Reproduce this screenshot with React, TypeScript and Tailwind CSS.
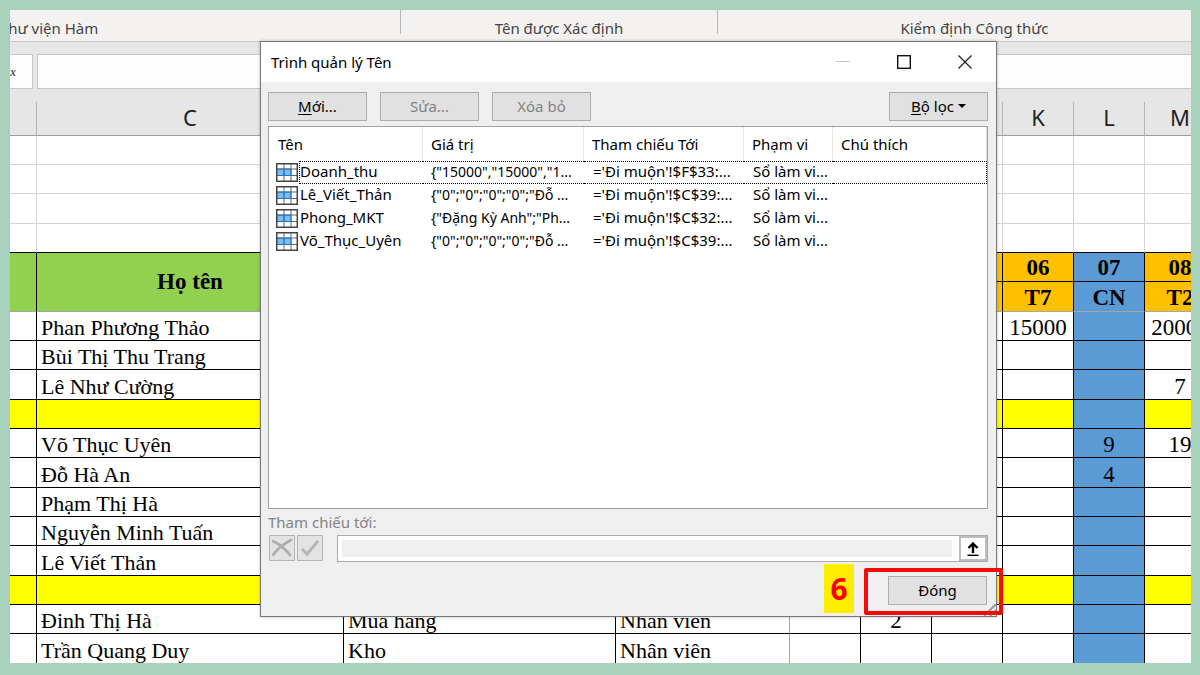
import type { ReactNode } from "react";
import clsx from "clsx";

/* ───────────── Data ───────────── */

interface SheetRow {
  kind: "data" | "divider";
  cells?: Record<string, string>;
}

const COLUMNS = ["B", "C", "D", "E", "H", "I", "J", "K", "L", "M"];

const DAYS = [
  { col: "H", day: "03", weekday: "T4" },
  { col: "I", day: "04", weekday: "T5" },
  { col: "J", day: "05", weekday: "T6" },
  { col: "K", day: "06", weekday: "T7" },
  { col: "L", day: "07", weekday: "CN" },
  { col: "M", day: "08", weekday: "T2" },
];

const ROWS: SheetRow[] = [
  { kind: "data", cells: { C: "Phan Phương Thảo", K: "15000", M: "20000" } },
  { kind: "data", cells: { C: "Bùi Thị Thu Trang" } },
  { kind: "data", cells: { C: "Lê Như Cường", M: "7" } },
  { kind: "divider" },
  { kind: "data", cells: { C: "Võ Thục Uyên", L: "9", M: "19" } },
  { kind: "data", cells: { C: "Đỗ Hà An", L: "4" } },
  { kind: "data", cells: { C: "Phạm Thị Hà" } },
  { kind: "data", cells: { C: "Nguyễn Minh Tuấn" } },
  { kind: "data", cells: { C: "Lê Viết Thản" } },
  { kind: "divider" },
  { kind: "data", cells: { C: "Đinh Thị Hà", D: "Mua hàng", E: "Nhân viên", I: "2" } },
  { kind: "data", cells: { C: "Trần Quang Duy", D: "Kho", E: "Nhân viên" } },
];

const NAMES = [
  { name: "Doanh_thu", value: '{"15000","15000","1...', refersTo: "='Đi muộn'!$F$33:...", scope: "Sổ làm vi..." },
  { name: "Lê_Viết_Thản", value: '{"0";"0";"0";"0";"Đỗ ...', refersTo: "='Đi muộn'!$C$39:...", scope: "Sổ làm vi..." },
  { name: "Phong_MKT", value: '{"Đặng Kỳ Anh";"Ph...', refersTo: "='Đi muộn'!$C$32:...", scope: "Sổ làm vi..." },
  { name: "Võ_Thục_Uyên", value: '{"0";"0";"0";"0";"Đỗ ...', refersTo: "='Đi muộn'!$C$39:...", scope: "Sổ làm vi..." },
];

/* ───────────── Page ───────────── */

export default function App() {
  return (
    <div className="relative flex h-screen flex-col overflow-hidden border-t-10 border-r-9 border-b-12 border-l-10 border-[#a8d1bc] bg-white font-['Noto_Sans','Open_Sans',sans-serif]">
      <RibbonLabels />
      <FormulaBar />
      <Sheet />
      <NameManager />
      <Callout />
    </div>
  );
}

function RibbonLabels() {
  return (
    <div className="flex h-8 shrink-0 border-b border-[#c9c9c9] bg-[#f3f2f1] text-[15px] leading-9 whitespace-nowrap text-[#444]">
      <div className="h-6 w-[391px] shrink-0 border-r border-[#b9b9b9]">
        <span className="-ml-2.5">Thư viện Hàm</span>
      </div>
      <div className="h-6 w-[317px] shrink-0 border-r border-[#b9b9b9] text-center">Tên được Xác định</div>
      <div className="h-6 w-[513px] shrink-0 text-center">Kiểm định Công thức</div>
    </div>
  );
}

function FormulaBar() {
  return (
    <div className="flex h-[60px] shrink-0 gap-1 bg-[#e6e6e6] pt-3">
      <div className="flex h-[35px] w-[23px] items-center border border-l-0 border-[#c6c6c6] bg-[#fdfdfd]">
        <span className="font-['Liberation_Serif',serif] text-xs font-bold text-[#555] italic">x</span>
      </div>
      <input
        aria-label="Formula"
        className="h-[35px] min-w-0 flex-1 border border-r-0 border-[#c6c6c6] bg-[#fdfdfd] px-2"
      />
    </div>
  );
}

/* ───────────── Worksheet ───────────── */

// Rows average 29⅓px, so every third one is a pixel taller.
function rowHeight(index: number) {
  return index % 3 === 2 ? "h-[30px]" : "h-[29px]";
}

function cellFill(col: string, row: SheetRow) {
  if (col === "L") return "bg-[#5b9bd5]";
  return row.kind === "divider" ? "bg-[#ffff00]" : "bg-white";
}

function Sheet() {
  return (
    <div className="min-h-0 flex-1 overflow-hidden">
      <table className="w-[1206px] table-fixed border-separate border-spacing-0 font-['Liberation_Serif',serif] text-[22px] leading-7 whitespace-nowrap text-black">
        <colgroup>
          <col className="w-[27px]" />
          <col className="w-[307px]" />
          <col className="w-[272px]" />
          <col className="w-[174px]" />
          {DAYS.map((d) => (
            <col key={d.col} className="w-[71px]" />
          ))}
        </colgroup>
        <thead>
          <tr className="h-[34px] bg-[#e6e6e6] font-['Noto_Sans',sans-serif] text-[#222]">
            {COLUMNS.map((col) => (
              <th
                key={col}
                className="border-r border-b border-r-[#b5b5b5] border-b-[#9f9f9f] px-0 pt-0 pb-1 font-normal"
              >
                {col === "B" ? "" : col}
              </th>
            ))}
          </tr>
        </thead>
        <tbody>
          {[0, 1, 2, 3].map((r) => (
            <tr key={r} className={rowHeight(r)}>
              {COLUMNS.map((col) => (
                <td
                  key={col}
                  className={clsx("border-r border-b border-r-[#d4d4d4] p-0", r === 3 ? "border-b-black" : "border-b-[#d4d4d4]")}
                />
              ))}
            </tr>
          ))}
          <tr className="h-[29px] text-[23px] font-bold">
            {["", "Họ tên", "Bộ phận", "Chức vụ"].map((label, i) => (
              <td
                key={i}
                rowSpan={2}
                className="border-r border-b border-r-black border-b-[#a6a6a6] bg-[#92d050] p-0 text-center"
              >
                {label}
              </td>
            ))}
            {DAYS.map((d) => (
              <td
                key={d.col}
                className={clsx(
                  "border-r border-b border-black px-0 pt-0.5 pb-0 text-center leading-[26px]",
                  d.col === "L" ? "bg-[#5b9bd5]" : "bg-[#ffc000]",
                )}
              >
                {d.day}
              </td>
            ))}
          </tr>
          <tr className="h-[30px] text-[23px] font-bold">
            {DAYS.map((d) => (
              <td
                key={d.col}
                className={clsx(
                  "border-r border-b border-r-black border-b-[#a6a6a6] px-0 pt-0.5 pb-0 text-center leading-[26px]",
                  d.col === "L" ? "bg-[#5b9bd5]" : "bg-[#ffc000]",
                )}
              >
                {d.weekday}
              </td>
            ))}
          </tr>
          {ROWS.map((row, r) => (
            <tr key={r} className={rowHeight(r)}>
              {COLUMNS.map((col, c) => (
                <td
                  key={col}
                  className={clsx(
                    "border-r border-b border-b-black pt-1 pb-0 leading-6",
                    c < 4 ? "pr-0 pl-1" : "px-0 text-center text-[23px]",
                    col === "E" ? "border-r-[#a6a6a6]" : "border-r-black",
                    cellFill(col, row),
                  )}
                >
                  {row.cells?.[col]}
                </td>
              ))}
            </tr>
          ))}
        </tbody>
      </table>
    </div>
  );
}

/* ───────────── Name manager dialog ───────────── */

function DialogButton({ children, disabled }: { children: ReactNode; disabled?: boolean }) {
  return (
    <button
      type="button"
      disabled={disabled}
      className="flex h-[29px] w-[99px] items-center justify-center border border-[#adadad] bg-[#e1e1e1] pb-0.5 text-black disabled:text-[#838383]"
    >
      {children}
    </button>
  );
}

function NameManager() {
  return (
    <div
      role="dialog"
      aria-labelledby="dialog-title"
      className="absolute top-[31px] left-[250px] flex h-[576px] w-[737px] flex-col border border-[#777] bg-[#efefef] text-[15px] leading-5 whitespace-nowrap text-black shadow-[0_0_3px_rgba(0,0,0,0.25)]"
    >
      <div className="flex h-10 shrink-0 items-center justify-between bg-white pr-6 pl-2.5">
        <h1 id="dialog-title">Trình quản lý Tên</h1>
        <div className="flex items-center gap-[47px]">
          <button type="button" aria-label="Minimize" disabled>
            <svg width="14" height="14" viewBox="0 0 14 14" stroke="#c4c4c4">
              <path d="M0 6.5h14" />
            </svg>
          </button>
          <button type="button" aria-label="Maximize">
            <svg width="14" height="14" viewBox="0 0 14 14" fill="none" stroke="#111" strokeWidth="1.4">
              <rect x="0.7" y="0.7" width="12.6" height="12.6" />
            </svg>
          </button>
          <button type="button" aria-label="Close">
            <svg width="14" height="14" viewBox="0 0 14 14" stroke="#222" strokeWidth="1.3">
              <path d="M0.5 0.5l13 13M13.5 0.5l-13 13" />
            </svg>
          </button>
        </div>
      </div>

      <div className="flex shrink-0 gap-[13px] pt-2.5 pr-2 pb-[5px] pl-[7px]">
        <DialogButton>
          <span>
            <u className="underline-offset-2">M</u>ới...
          </span>
        </DialogButton>
        <DialogButton disabled>Sửa...</DialogButton>
        <DialogButton disabled>Xóa bỏ</DialogButton>
        <div className="ml-auto">
          <DialogButton>
            <span>
              <u className="underline-offset-2">B</u>ộ lọc
            </span>
            <svg className="ml-1" width="8" height="4" viewBox="0 0 8 4">
              <path d="M0 0h8L4 4z" />
            </svg>
          </DialogButton>
        </div>
      </div>

      <div className="mr-2 ml-[7px] h-[383px] shrink-0 border border-[#a0a0a0] bg-white">
        <NameTable />
      </div>

      <label htmlFor="refers-to" className="mt-[3px] ml-[7px] text-[#838383]">
        Tham chiếu tới:
      </label>
      <div className="mt-[3px] mr-2 ml-2 flex">
        <button type="button" aria-label="Cancel" disabled className="grid size-[26px] place-items-center border border-[#b4b4b4] bg-[#e3e3e3]">
          <svg width="22" height="20" viewBox="0 0 22 20" fill="none" stroke="#adadad" strokeLinecap="round">
            <path d="M2 3C8 6 15 12 19 17" strokeWidth="2.6" />
            <path d="M20 2C13 6 6 11 2 17" strokeWidth="2.6" />
          </svg>
        </button>
        <button type="button" aria-label="Accept" disabled className="ml-0.5 grid size-[26px] place-items-center border border-[#b4b4b4] bg-[#e3e3e3]">
          <svg width="20" height="20" viewBox="0 0 20 20" fill="none" stroke="#b6b6b6" strokeWidth="3">
            <path d="M2 11l5 5L18 3" />
          </svg>
        </button>
        <div className="ml-3.5 flex h-[27px] flex-1 border border-[#ababab] bg-white">
          <input id="refers-to" disabled className="my-1 mr-[7px] ml-1 min-w-0 flex-1 bg-[#efefef]" />
          <button type="button" aria-label="Collapse dialog" className="grid w-7 place-items-center border-2 border-[#bdbdbd] bg-white">
            <svg width="12" height="14" viewBox="0 0 12 14" fill="none" stroke="#000">
              <path d="M6 11V2M1.5 6L6 1.5L10.5 6" strokeWidth="2.4" />
              <path d="M0.5 13.3h11" strokeWidth="1.4" />
            </svg>
          </button>
        </div>
      </div>

      <div className="mt-3.5 mr-[9px] flex justify-end">
        <DialogButton>Đóng</DialogButton>
      </div>
      <svg className="absolute right-0 bottom-0" width="12" height="12" viewBox="0 0 12 12" stroke="#999" strokeWidth="2">
        <path d="M0 12L12 0M6 12l6-6" />
      </svg>
    </div>
  );
}

function NameTable() {
  return (
    <table className="w-full table-fixed border-separate border-spacing-0 text-left">
      <colgroup>
        <col className="w-[30px]" />
        <col className="w-[124px]" />
        <col className="w-[161px]" />
        <col className="w-[160px]" />
        <col className="w-[89px]" />
        <col />
      </colgroup>
      <thead>
        <tr className="h-[34px]">
          <th colSpan={2} className="border-r border-[#e2e2e2] py-0 pl-[9px] font-normal">Tên</th>
          <th className="border-r border-[#e2e2e2] py-0 pl-2 font-normal">Giá trị</th>
          <th className="border-r border-[#e2e2e2] py-0 pl-2 font-normal">Tham chiếu Tới</th>
          <th className="border-r border-[#e2e2e2] py-0 pl-2 font-normal">Phạm vi</th>
          <th className="border-r border-[#e2e2e2] py-0 pl-2 font-normal">Chú thích</th>
        </tr>
      </thead>
      <tbody>
        {NAMES.map((n, i) => {
          const focus = i === 0 && "border-y border-dotted border-black";
          return (
            <tr key={n.name} className="h-[23px] leading-[19px]">
              <td className="py-0 pl-[7px]">
                <RangeIcon />
              </td>
              <td className={clsx("pt-0 pb-0.5", i === 0 ? "border-l" : "pl-px", focus)}>{n.name}</td>
              <td className={clsx("pt-0 pb-0.5 pl-2 text-sm leading-[19px]", focus)}>{n.value}</td>
              <td className={clsx("pt-0 pb-0.5 pl-[9px]", focus)}>{n.refersTo}</td>
              <td className={clsx("pt-0 pb-0.5 pl-[9px]", focus)}>{n.scope}</td>
              <td className={clsx("p-0", i === 0 && "border-r", focus)} />
            </tr>
          );
        })}
      </tbody>
    </table>
  );
}

function RangeIcon() {
  return (
    <svg className="block" width="22" height="19" viewBox="0 0 22 19" fill="none">
      <rect x="1" y="1" width="20" height="17" fill="#fff" />
      <rect x="1" y="6" width="14" height="7" fill="#7cbcf0" />
      <path d="M1 6h20M1 12.5h20M8 1v17M15 1v17" stroke="#666" />
      <path d="M1 6h14M1 12.5h14M8 6v7M15 6v7" stroke="#1a78c8" />
      <rect x="0.75" y="0.75" width="20.5" height="17.5" stroke="#444" strokeWidth="1.5" />
    </svg>
  );
}

/* ───────────── Step marker over the close button ───────────── */

function Callout() {
  return (
    <div className="pointer-events-none absolute top-[554px] left-[814px] flex items-start gap-2.5">
      <span className="flex h-[49px] w-[30px] items-center justify-center bg-[#ffed00] text-[30px] font-bold text-[#f00]">
        6
      </span>
      <span className="mt-1 h-[47px] w-[139px] rounded-[2px] border-4 border-[#f50a0a]" />
    </div>
  );
}
